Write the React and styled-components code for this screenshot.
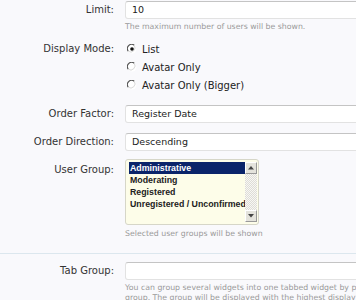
import React from "react";
import styled, { createGlobalStyle } from "styled-components";

const GlobalStyle = createGlobalStyle`
  html, body {
    margin: 0;
    padding: 0;
    background: #f9f9fc;
  }
  body {
    font-family: "DejaVu Sans", "Liberation Sans", sans-serif;
    color: #333;
    overflow: hidden;
  }
`;

const Form = styled.div`
  width: 356px;
  height: 300px;
  padding-top: 1px;
  box-sizing: border-box;
  overflow: hidden;
`;

const Section = styled.div`
  padding-bottom: ${(p) => p.$pb || 0}px;
  border-bottom: ${(p) => (p.$line ? "1px solid #dce7ee" : "none")};
  margin-bottom: ${(p) => p.$mb || 0}px;
`;

const Row = styled.div`
  display: grid;
  grid-template-columns: 114px 1fr;
  column-gap: 11px;
  margin-bottom: ${(p) => p.$mb || 0}px;
`;

const Label = styled.div`
  text-align: right;
  font-size: 10px;
  line-height: 18px;
  color: #333;
  white-space: nowrap;
  padding-top: ${(p) => p.$pt || 0}px;
`;

const Field = styled.div`
  min-width: 0;
`;

const TextInput = styled.div`
  height: 18px;
  width: 260px;
  box-sizing: border-box;
  background: #fff;
  border: 1px solid #e2e2e2;
  border-top-color: #c4c4c4;
  border-radius: 3px 0 0 3px;
  padding-left: 6px;
  font-size: 9.5px;
  line-height: 16px;
  color: #222;
  white-space: nowrap;
`;

const Hint = styled.div`
  font-size: 7.8px;
  line-height: 10px;
  color: #9a9a9a;
  margin-top: ${(p) => p.$mt || 3}px;
  white-space: nowrap;
`;

const Options = styled.div`
  display: flex;
  flex-direction: column;
`;

const Option = styled.div`
  display: flex;
  align-items: center;
  gap: 5px;
  height: 18px;
  font-size: 10px;
  color: #222;
  padding-left: 2px;
`;

const Radio = ({ checked }) => (
  <svg width="10" height="10" viewBox="0 0 10 10">
    <circle cx="5" cy="5" r="4.5" fill="#fff" />
    <path d="M1.2 7.2 A4.3 4.3 0 0 1 7.2 1.2" stroke="#555" strokeWidth="1.2" fill="none" />
    <path d="M7.2 1.2 A4.3 4.3 0 0 1 1.2 7.2" stroke="#d8d8d8" strokeWidth="1" fill="none" />
    {checked && <circle cx="5" cy="5" r="1.8" fill="#111" />}
  </svg>
);

const ListBox = styled.div`
  width: 134px;
  height: 66px;
  box-sizing: border-box;
  border: 1px solid #d6d6c8;
  border-radius: 3px;
  background: #fdfde9;
  display: flex;
  padding: 2px 1px 2px 3px;
`;

const Items = styled.div`
  flex: 1;
  min-width: 0;
`;

const Item = styled.div`
  height: 12px;
  line-height: 12px;
  font-family: "Liberation Sans", sans-serif;
  font-size: 8.8px;
  font-weight: bold;
  padding-left: 1px;
  white-space: nowrap;
  color: ${(p) => (p.$selected ? "#fff" : "#222")};
  background: ${(p) => (p.$selected ? "#0a246a" : "transparent")};
`;

const ScrollBar = styled.div`
  width: 12px;
  display: flex;
  flex-direction: column;
  justify-content: space-between;
  background-color: #ecebe6;
  background-image: repeating-conic-gradient(#f7f7f4 0 25%, #dedcd6 0 50%);
  background-size: 2px 2px;
`;

const ScrollButton = styled.div`
  height: 12px;
  background: #e4e3dc;
  border: 1px solid;
  border-color: #fff #999 #999 #fff;
  box-sizing: border-box;
  display: flex;
  align-items: center;
  justify-content: center;
`;

const Arrow = ({ down }) => (
  <svg width="6" height="4" viewBox="0 0 6 4">
    <path d={down ? "M0 0 H6 L3 3.5 Z" : "M0 3.5 H6 L3 0 Z"} fill="#444" />
  </svg>
);

export default function App() {
  return (
    <>
      <GlobalStyle />
      <Form>
        <Section $pb={14} $line $mb={8}>
          <Row $mb={8}>
            <Label>Limit:</Label>
            <Field>
              <TextInput>10</TextInput>
              <Hint>The maximum number of users will be shown.</Hint>
            </Field>
          </Row>

          <Row $mb={11}>
            <Label>Display Mode:</Label>
            <Options>
              <Option>
                <Radio checked />
                List
              </Option>
              <Option>
                <Radio />
                Avatar Only
              </Option>
              <Option>
                <Radio />
                Avatar Only (Bigger)
              </Option>
            </Options>
          </Row>

          <Row $mb={10}>
            <Label>Order Factor:</Label>
            <Field>
              <TextInput>Register Date</TextInput>
            </Field>
          </Row>

          <Row $mb={8}>
            <Label>Order Direction:</Label>
            <Field>
              <TextInput>Descending</TextInput>
            </Field>
          </Row>

          <Row>
            <Label $pt={2}>User Group:</Label>
            <Field>
              <ListBox>
                <Items>
                  <Item $selected>Administrative</Item>
                  <Item>Moderating</Item>
                  <Item>Registered</Item>
                  <Item>Unregistered / Unconfirmed</Item>
                </Items>
                <ScrollBar>
                  <ScrollButton>
                    <Arrow />
                  </ScrollButton>
                  <ScrollButton>
                    <Arrow down />
                  </ScrollButton>
                </ScrollBar>
              </ListBox>
              <Hint $mt={4}>Selected user groups will be shown</Hint>
            </Field>
          </Row>
        </Section>

        <Row>
          <Label>Tab Group:</Label>
          <Field>
            <TextInput />
            <Hint $mt={3}>
              You can group several widgets into one tabbed widget by pointing them to the same
              <br />
              group. The group will be displayed with the highest display order.
            </Hint>
          </Field>
        </Row>
      </Form>
    </>
  );
}
